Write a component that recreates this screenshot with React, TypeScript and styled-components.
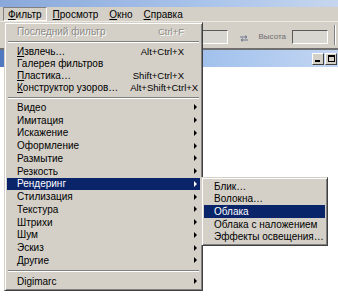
import React from "react";
import styled, { createGlobalStyle } from "styled-components";

/**--------------------------------------------
    Global page reset
-----------------------------------------------*/
const GlobalStyle = createGlobalStyle`
    html, body {
        margin: 0;
        padding: 0;
        background: #ffffff;
    }
    body {
        width: 338px;
        height: 300px;
        overflow: hidden;
        font-family: "Liberation Sans", Arial, sans-serif;
        font-size: 10px;
        color: #000;
    }
`;

/**--------------------------------------------
    Application frame (behind the menu)
-----------------------------------------------*/
const Frame = styled.div`
    position: relative;
    width: 338px;
    height: 300px;
    display: flex;
    flex-direction: column;
    background: #ffffff;
`;

const TopStrip = styled.div`
    height: 7px;
    background: linear-gradient(90deg, #8aa9da 0%, #a9c3ea 60%, #c6d6ee 100%);
`;

const MenuBar = styled.div`
    height: 14px;
    display: flex;
    align-items: center;
    gap: 1px;
    padding-left: 3px;
    background: #d4d0c8;
`;

const MenuTitle = styled.div<{ $pressed?: boolean }>`
    height: 12px;
    display: flex;
    align-items: center;
    padding: 0 4px;
    border: 1px solid;
    border-color: ${({ $pressed }) => ($pressed ? "#808080 #ffffff #ffffff #808080" : "transparent")};
    white-space: nowrap;
`;

const OptionsBar = styled.div`
    height: 26px;
    display: flex;
    align-items: center;
    padding-right: 3px;
    background: #d4d0c8;
    border-top: 1px solid #ece9e2;
    border-bottom: 2px solid #6f6f6f;
`;

const Spacer = styled.div`
    flex: 1;
`;

const Field = styled.div<{ $w: number }>`
    width: ${({ $w }) => $w}px;
    height: 12px;
    margin-top: 3px;
    background: #d8d6d0;
    border: 1px solid;
    border-color: #5a5a5a #ffffff #ffffff #5a5a5a;
`;

const Swap = styled.svg`
    margin: 6px 10px 0 11px;
`;

const Label = styled.span`
    color: #6d6d6d;
    font-size: 8px;
    margin: 2px 6px 0 0;
`;

const Divider = styled.div`
    width: 1px;
    height: 20px;
    margin-left: 6px;
    background: #808080;
    box-shadow: 1px 0 0 #ffffff;
`;

const DocTitle = styled.div`
    height: 17px;
    display: flex;
    align-items: center;
    justify-content: flex-end;
    gap: 1px;
    padding-right: 1px;
    background: linear-gradient(90deg, #4f78c0 0%, #8bb0e4 30%, #a9c6ee 70%, #c3d6f2 100%);
`;

const WinButton = styled.div`
    width: 10px;
    height: 10px;
    display: flex;
    align-items: center;
    justify-content: center;
    background: #d4d0c8;
    border: 1px solid;
    border-color: #ffffff #404040 #404040 #ffffff;
`;

const Canvas = styled.div`
    flex: 1;
    background: #ffffff;
`;

/**--------------------------------------------
    Drop-down menus
-----------------------------------------------*/
const Popup = styled.div<{ $left: number; $top: number; $width: number }>`
    position: absolute;
    left: ${({ $left }) => $left}px;
    top: ${({ $top }) => $top}px;
    width: ${({ $width }) => $width}px;
    box-sizing: border-box;
    padding: 2px;
    background: #d4d0c8;
    border: 1px solid;
    border-color: #d4d0c8 #404040 #404040 #d4d0c8;
    box-shadow: inset 1px 1px 0 #ffffff, inset -1px -1px 0 #808080;
`;

const Item = styled.div<{ $active?: boolean; $disabled?: boolean; $h?: number }>`
    height: ${({ $h }) => $h ?? 12.8}px;
    display: grid;
    grid-template-columns: 1fr auto 16px;
    align-items: center;
    padding-left: 10px;
    white-space: nowrap;
    background: ${({ $active }) => ($active ? "#0a246a" : "transparent")};
    color: ${({ $active, $disabled }) => ($active ? "#ffffff" : $disabled ? "#8c8a86" : "#000000")};
    text-shadow: ${({ $disabled }) => ($disabled ? "1px 1px 0 #ffffff" : "none")};
`;

const Shortcut = styled.span`
    text-align: right;
    padding-left: 12px;
    font-size: 9.5px;
`;

const Arrow = styled.span<{ $active?: boolean }>`
    justify-self: end;
    margin-right: 3px;
    width: 0;
    height: 0;
    border-top: 3px solid transparent;
    border-bottom: 3px solid transparent;
    border-left: 3px solid ${({ $active }) => ($active ? "#ffffff" : "#000000")};
`;

const Separator = styled.div`
    height: 8px;
    display: flex;
    align-items: center;
    &::after {
        content: "";
        flex: 1;
        margin: 0 1px;
        height: 1px;
        background: #808080;
        box-shadow: 0 1px 0 #ffffff;
    }
`;

const U = styled.span`
    text-decoration: underline;
`;

type Entry =
    | { sep: true }
    | { label: React.ReactNode; key?: string; sub?: boolean; active?: boolean; disabled?: boolean };

const filterMenu: Entry[] = [
    { label: "Последний фильтр", key: "Ctrl+F", disabled: true },
    { sep: true },
    { label: <><U>И</U>звлечь…</>, key: "Alt+Ctrl+X" },
    { label: "Галерея фильтров" },
    { label: <><U>П</U>ластика…</>, key: "Shift+Ctrl+X" },
    { label: <><U>К</U>онструктор узоров…</>, key: "Alt+Shift+Ctrl+X" },
    { sep: true },
    { label: "Видео", sub: true },
    { label: "Имитация", sub: true },
    { label: "Искажение", sub: true },
    { label: "Оформление", sub: true },
    { label: "Размытие", sub: true },
    { label: "Резкость", sub: true },
    { label: "Рендеринг", sub: true, active: true },
    { label: "Стилизация", sub: true },
    { label: "Текстура", sub: true },
    { label: "Штрихи", sub: true },
    { label: "Шум", sub: true },
    { label: "Эскиз", sub: true },
    { label: "Другие", sub: true },
    { sep: true },
    { label: "Digimarc", sub: true },
];

const renderMenu: Entry[] = [
    { label: "Блик…" },
    { label: "Волокна…" },
    { label: "Облака", active: true },
    { label: "Облака с наложением" },
    { label: "Эффекты освещения…" },
];

const MenuList: React.FC<{ items: Entry[]; rowHeight?: (i: number) => number }> = ({ items, rowHeight }) => (
    <>
        {items.map((it, i) =>
            "sep" in it ? (
                <Separator key={i} />
            ) : (
                <Item key={i} $active={it.active} $disabled={it.disabled} $h={rowHeight?.(i)}>
                    <span>{it.label}</span>
                    <Shortcut>{it.key ?? ""}</Shortcut>
                    {it.sub ? <Arrow $active={it.active} /> : <span />}
                </Item>
            )
        )}
    </>
);

/**--------------------------------
    App
-----------------------------------*/
export default function App() {
    return (
        <>
            <GlobalStyle />
            <Frame>
                <TopStrip />
                <MenuBar>
                    <MenuTitle $pressed>
                        <U>Ф</U>ильтр
                    </MenuTitle>
                    <MenuTitle>
                        <U>П</U>росмотр
                    </MenuTitle>
                    <MenuTitle>
                        <U>О</U>кно
                    </MenuTitle>
                    <MenuTitle>
                        <U>С</U>правка
                    </MenuTitle>
                </MenuBar>
                <OptionsBar>
                    <Spacer />
                    <Field $w={27} />
                    <Swap width="10" height="7" viewBox="0 0 10 7">
                        <path d="M1 2h7M6 0.5l2 1.5-2 1.5M9 5H2M4 3.5L2 5l2 1.5" stroke="#6a7890" strokeWidth="1" fill="none" />
                    </Swap>
                    <Label>Высота</Label>
                    <Field $w={34} />
                    <Divider />
                </OptionsBar>
                <DocTitle>
                    <WinButton>
                        <svg width="6" height="6" viewBox="0 0 6 6">
                            <rect x="0" y="4" width="5" height="2" fill="#000" />
                        </svg>
                    </WinButton>
                    <WinButton>
                        <svg width="7" height="7" viewBox="0 0 7 7">
                            <rect x="0.5" y="0.5" width="6" height="6" fill="none" stroke="#000" />
                            <rect x="0" y="0" width="7" height="2" fill="#000" />
                        </svg>
                    </WinButton>
                </DocTitle>
                <Canvas />

                <Popup $left={4} $top={22} $width={199}>
                    <MenuList items={filterMenu} rowHeight={(i) => (i < 6 ? 12 : 12.75)} />
                </Popup>
                <Popup $left={201} $top={177} $width={127}>
                    <MenuList items={renderMenu} rowHeight={() => 12.6} />
                </Popup>
            </Frame>
        </>
    );
}
